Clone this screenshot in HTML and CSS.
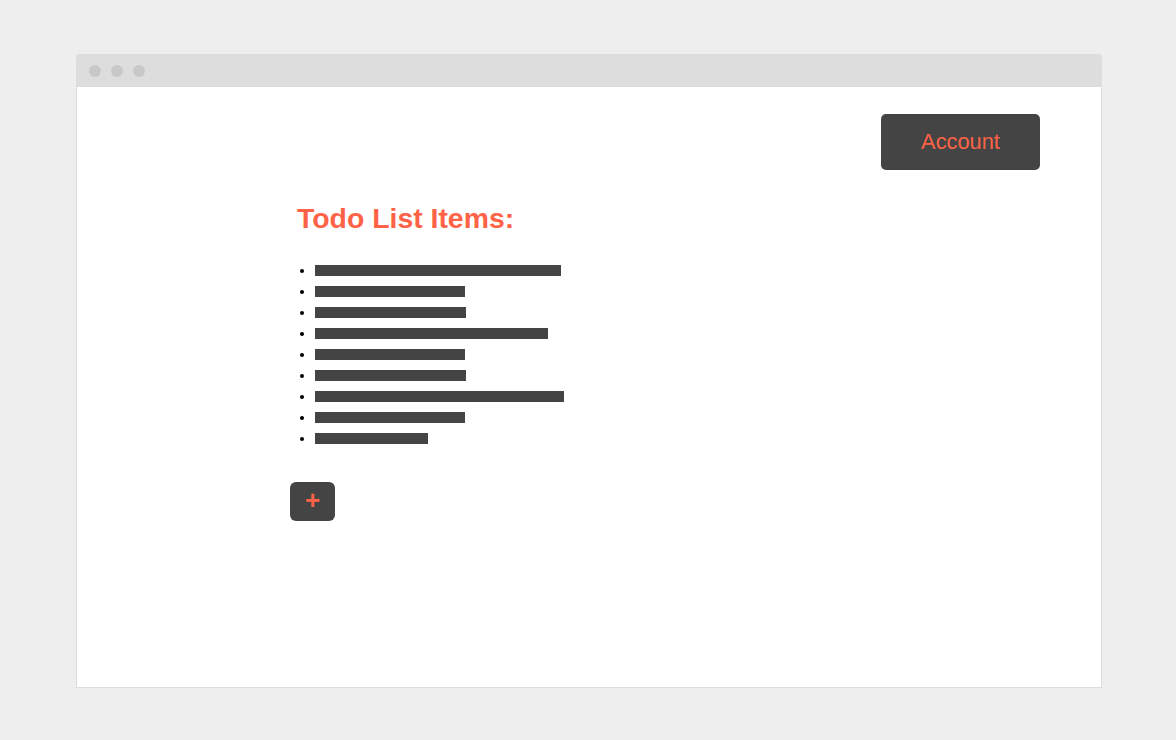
FILE: index.html
```html
<!DOCTYPE html>
<html>
<head>
<meta charset="utf-8">
<link rel="stylesheet" href="styles.css">
</head>
<body>
<div class="window">
  <div class="titlebar">
    <span class="dot"></span><span class="dot"></span><span class="dot"></span>
  </div>
  <div class="content">
    <div class="topbar">
      <button class="account">Account</button>
    </div>
    <div class="main">
      <h1 class="title">Todo List Items:</h1>
      <ul class="todos">
        <li><span class="bar" style="width:246px"></span></li>
        <li><span class="bar" style="width:150px"></span></li>
        <li><span class="bar" style="width:151px"></span></li>
        <li><span class="bar" style="width:233px"></span></li>
        <li><span class="bar" style="width:150px"></span></li>
        <li><span class="bar" style="width:151px"></span></li>
        <li><span class="bar" style="width:249px"></span></li>
        <li><span class="bar" style="width:150px"></span></li>
        <li><span class="bar" style="width:113px"></span></li>
      </ul>
      <button class="add">+</button>
    </div>
  </div>
</div>
</body>
</html>
```
FILE: styles.css
```css
html, body {
  margin: 0;
  padding: 0;
}
body {
  background: #eeeeee;
  font-family: "Liberation Sans", Arial, sans-serif;
  padding: 54px 74px 52px 76px;
}
.window {
  width: 1026px;
  height: 634px;
  box-sizing: border-box;
  background: #fff;
  border: 1px solid #dddddd;
  border-top: none;
  border-radius: 4px 4px 0 0;
  display: flex;
  flex-direction: column;
}
.titlebar {
  height: 33px;
  margin: 0 -1px;
  background: #dddddd;
  border-radius: 4px 4px 0 0;
  display: flex;
  align-items: center;
  gap: 10px;
  padding-left: 13px;
  flex-shrink: 0;
}
.dot {
  width: 12px;
  height: 12px;
  border-radius: 50%;
  background: #c8c8c8;
}
.content {
  flex: 1;
  display: flex;
  flex-direction: column;
  padding: 27px 61px 0 213px;
}
.topbar {
  display: flex;
  justify-content: flex-end;
}
.account {
  width: 159px;
  height: 56px;
  border: none;
  border-radius: 5px;
  background: #444444;
  color: #ff6347;
  font-family: "Liberation Sans", Arial, sans-serif;
  font-size: 21.8px;
  padding: 0;
}
.main {
  display: flex;
  flex-direction: column;
  align-items: flex-start;
}
.title {
  margin: 27px 0 0 7px;
  font-size: 28.4px;
  line-height: 42px;
  font-weight: bold;
  color: #ff6347;
}
.todos {
  margin: 20px 0 0 0;
  padding: 0 0 0 25px;
  list-style: disc;
  color: #000;
}
.todos li {
  height: 21px;
  line-height: 21px;
  font-size: 16px;
}
.todos li::marker {
  font-size: 13px;
}
.bar {
  display: inline-block;
  height: 11px;
  background: #444444;
  vertical-align: middle;
}
.add {
  margin-top: 34px;
  width: 45px;
  height: 39px;
  border: none;
  border-radius: 6px;
  background: #444444;
  color: #ff6347;
  font-family: "Liberation Sans", Arial, sans-serif;
  font-weight: bold;
  font-size: 26px;
  line-height: 1;
  padding: 0 0 3px 0;
}
```
